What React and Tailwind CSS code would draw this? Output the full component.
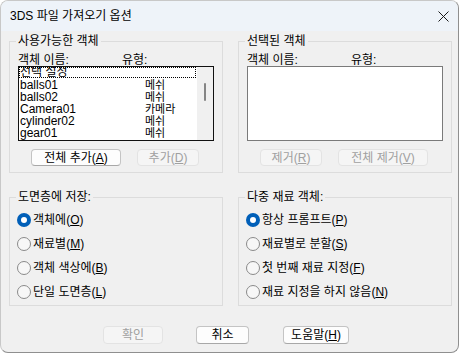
import React from 'react';

const FONT = "font-['Liberation_Sans','Noto_Sans_CJK_KR',sans-serif]";

const Key = ({ label, k }) => (
  <>
    {label}(<span className="underline underline-offset-[1px]">{k}</span>)
  </>
);

const Button = ({ children, disabled, className = '' }) => (
  <button
    className={`flex items-center justify-center rounded-[4px] border text-[12px] leading-none ${
      disabled
        ? 'bg-[#f5f5f5] border-[#e3e3e3] text-[#a0a0a0]'
        : 'bg-[#fdfdfd] border-[#c4c4c4] border-b-[#a8a8a8] text-black'
    } ${className}`}
  >
    {children}
  </button>
);

const GroupBox = ({ title, className = '', children }) => (
  <div className={`relative border border-[#dcdcdc] ${className}`}>
    <span className="absolute -top-[9px] left-[6px] px-[2px] bg-[#f0f0f0] text-[12px] leading-[16px]">
      {title}
    </span>
    {children}
  </div>
);

const Radio = ({ checked, children }) => (
  <div className="flex items-center h-[24px]">
    {checked ? (
      <span className="w-[14px] h-[14px] rounded-full bg-[#005fb8] flex items-center justify-center">
        <span className="w-[6px] h-[6px] rounded-full bg-white" />
      </span>
    ) : (
      <span className="w-[14px] h-[14px] rounded-full border border-[#8a8a8a] bg-[#f7f7f7]" />
    )}
    <span className="ml-[2px] text-[12px]">{children}</span>
  </div>
);

const items = [
  ['선택 설정', ''],
  ['balls01', '메쉬'],
  ['balls02', '메쉬'],
  ['Camera01', '카메라'],
  ['cylinder02', '메쉬'],
  ['gear01', '메쉬'],
];

const Headers = () => (
  <div className="flex h-[13px] leading-[15px] text-[12px]">
    <span className="w-[104px]">객체 이름:</span>
    <span>유형:</span>
  </div>
);

export default function App() {
  return (
    <div className={`w-[459px] h-[353px] ${FONT} text-black`}>
      <div className="w-full h-full rounded-[8px] border border-[#c8c8c8] border-r-[#8f8f8f] border-b-[#8f8f8f] overflow-hidden bg-[#f0f0f0] flex flex-col">
        {/* title bar */}
        <div className="h-[30px] bg-[#eef3f9] flex items-center justify-between pl-[9px] pr-[9px]">
          <span className="text-[12px]">3DS 파일 가져오기 옵션</span>
          <svg width="11" height="11" viewBox="0 0 11 11" stroke="#1a1a1a" strokeWidth="1">
            <path d="M0.5 0.5 L10.5 10.5 M10.5 0.5 L0.5 10.5" />
          </svg>
        </div>

        <div className="pl-[8px] pr-[6px]">
          {/* top groups */}
          <div className="flex gap-[15px] mt-[10px]">
            <GroupBox title="사용가능한 객체" className="w-[214px] h-[132px] pt-[11px] pl-[8px]">
              <Headers />
              <div className="w-[196px] h-[75px] border border-[#111] bg-white flex overflow-hidden">
                <div className="flex-1 text-[12px]">
                  {items.map(([name, type], i) => (
                    <div key={name} className="relative flex h-[12px] leading-[12px]">
                      {i === 0 && (
                        <span className="absolute left-0 top-0 w-[177px] h-[11px] border border-dotted border-black" />
                      )}
                      <span className={`w-[126px] pl-[1px] whitespace-nowrap ${i === 0 ? '-mt-[1px]' : ''}`}>{name}</span>
                      <span className="whitespace-nowrap text-[11px]">{type}</span>
                    </div>
                  ))}
                </div>
                <div className="w-[16px] bg-[#f0f0f0] relative">
                  <span className="absolute left-[7px] top-[16px] w-[2px] h-[18px] rounded-full bg-[#858585]" />
                </div>
              </div>
              <div className="flex mt-[8px] ml-[13px] gap-[16px]">
                <Button className="w-[90px] h-[17px] border-[#8c8c8c]">
                  <Key label="전체 추가" k="A" />
                </Button>
                <Button disabled className="w-[62px] h-[17px]">
                  <Key label="추가" k="D" />
                </Button>
              </div>
            </GroupBox>

            <GroupBox title="선택된 객체" className="w-[214px] h-[132px] pt-[11px] pl-[8px]">
              <Headers />
              <div className="w-[196px] h-[75px] border border-[#7a7a7a] bg-white" />
              <div className="flex mt-[8px] ml-[13px] gap-[16px]">
                <Button disabled className="w-[62px] h-[17px]">
                  <Key label="제거" k="R" />
                </Button>
                <Button disabled className="w-[90px] h-[17px]">
                  <Key label="전체 제거" k="V" />
                </Button>
              </div>
            </GroupBox>
          </div>

          {/* lower groups */}
          <div className="flex gap-[15px] mt-[24px]">
            <GroupBox title="도면층에 저장:" className="w-[214px] h-[109px] pt-[10px] pl-[7px]">
              <Radio checked><Key label="객체에" k="O" /></Radio>
              <Radio><Key label="재료별" k="M" /></Radio>
              <Radio><Key label="객체 색상에" k="B" /></Radio>
              <Radio><Key label="단일 도면층" k="L" /></Radio>
            </GroupBox>
            <GroupBox title="다중 재료 객체:" className="w-[214px] h-[109px] pt-[10px] pl-[7px]">
              <Radio checked><Key label="항상 프롬프트" k="P" /></Radio>
              <Radio><Key label="재료별로 분할" k="S" /></Radio>
              <Radio><Key label="첫 번째 재료 지정" k="F" /></Radio>
              <Radio><Key label="재료 지정을 하지 않음" k="N" /></Radio>
            </GroupBox>
          </div>

          {/* bottom buttons */}
          <div className="flex mt-[20px] ml-[94px]">
            <Button disabled className="w-[60px] h-[18px]">확인</Button>
            <Button className="w-[53px] h-[18px] ml-[33px]">취소</Button>
            <Button className="w-[66px] h-[18px] ml-[34px]">
              <Key label="도움말" k="H" />
            </Button>
          </div>
        </div>
      </div>
    </div>
  );
}
